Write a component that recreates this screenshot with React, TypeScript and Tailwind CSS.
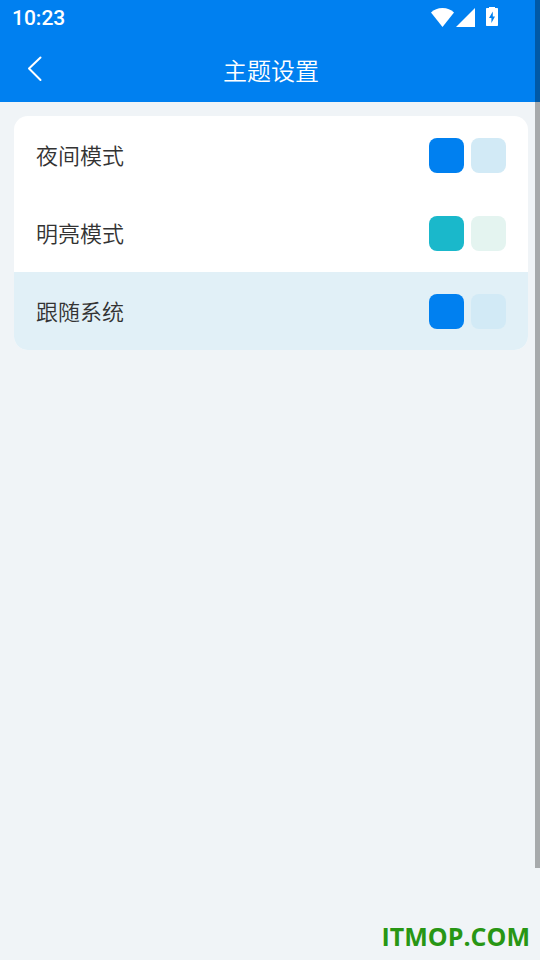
import { useState } from "react";

type Theme = { id: string; label: string; primary: string; soft: string };

const themes: Theme[] = [
  { id: "night", label: "夜间模式", primary: "bg-[#0080f0]", soft: "bg-[#d2eaf6]" },
  { id: "light", label: "明亮模式", primary: "bg-[#1ab8cb]", soft: "bg-[#e4f4f0]" },
  { id: "system", label: "跟随系统", primary: "bg-[#0080f0]", soft: "bg-[#d2eaf6]" },
];

function StatusBar() {
  return (
    <div className="flex h-9 items-center justify-between pl-3 pr-[41px]">
      <span className="font-['Roboto',sans-serif] text-[21px] font-medium leading-6">10:23</span>
      <div className="flex h-9 items-start pt-[7px]">
        <svg width="24" height="20" viewBox="0 0 24 20" fill="currentColor" aria-hidden="true">
          <path d="M1 5.600C4 2.600 7.800 1 12.500 1s8.500 1.600 11.500 4.600L12.500 20z" />
        </svg>
        <svg className="ml-px" width="20" height="20" viewBox="0 0 20 20" fill="currentColor" aria-hidden="true">
          <path d="M20 1v19H1z" />
        </svg>
        <svg className="ml-[10px]" width="14" height="20" viewBox="0 0 14 20" fill="currentColor" aria-hidden="true">
          <path
            fillRule="evenodd"
            d="M4 0h6v1h2c.6 0 1 .4 1 1v16c0 .6-.4 1-1 1H2c-.6 0-1-.4-1-1V2c0-.6.4-1 1-1h2zM7.800 4.500L4 11h2.400v5L10 9.500H7.800z"
          />
        </svg>
      </div>
    </div>
  );
}

export default function App() {
  const [selected, setSelected] = useState("system");

  return (
    <div className="flex min-h-screen flex-col bg-[#f0f4f7] font-['Noto_Sans_CJK_SC',sans-serif]">
      <header className="bg-[#0080f0] text-white">
        <StatusBar />
        <div className="grid h-[66px] grid-cols-[64px_1fr_64px] items-center">
          <button type="button" aria-label="返回" className="flex h-full items-center pl-[26px]">
            <svg width="18" height="26" viewBox="0 0 18 26" fill="none" stroke="currentColor" strokeWidth="2" strokeLinecap="round" strokeLinejoin="round" aria-hidden="true">
              <path d="M14.500 1.500L3 12.500l11.500 11.500" />
            </svg>
          </button>
          <h1 className="pl-0.5 pt-0.5 text-center text-2xl font-[350]">主题设置</h1>
        </div>
      </header>

      <main className="flex-1 pb-4 pl-3.5 pr-3 pt-3.5">
        <fieldset aria-label="主题设置" className="overflow-hidden rounded-[14px] bg-white">
          {themes.map((theme) => (
            <label
              key={theme.id}
              className="flex h-[78px] cursor-pointer items-center gap-[7px] px-[22px] has-checked:bg-[#e1f0f7]"
            >
              <input
                type="radio"
                name="theme"
                value={theme.id}
                checked={selected === theme.id}
                onChange={() => setSelected(theme.id)}
                className="sr-only"
              />
              <span className="flex-1 pb-0.5 text-[22px] font-[350] leading-8 text-[#333333]">{theme.label}</span>
              <span className={`size-[35px] rounded-lg ${theme.primary}`} />
              <span className={`size-[35px] rounded-lg ${theme.soft}`} />
            </label>
          ))}
        </fieldset>
      </main>

      <footer className="px-2.5 pb-2 text-right font-['Open_Sans',sans-serif] text-[25px] font-bold leading-8 text-[#289614]">
        ITMOP.COM
      </footer>

      <div className="fixed right-0 top-0 h-[868px] w-[5px] bg-black/30" />
    </div>
  );
}
